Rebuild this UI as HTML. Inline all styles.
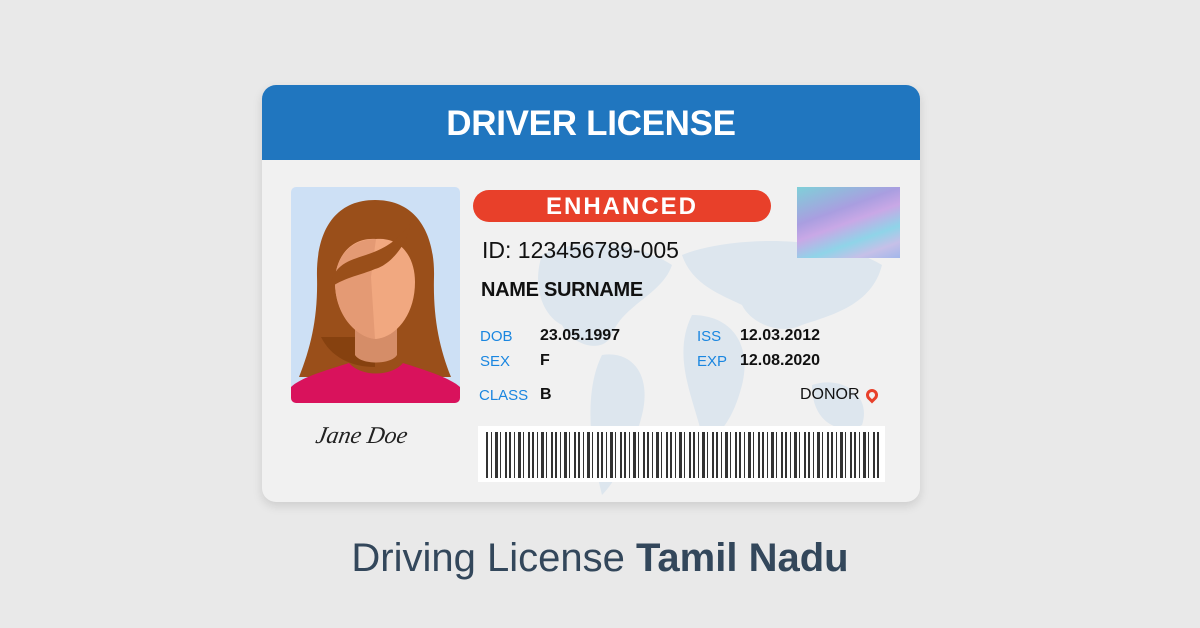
<!DOCTYPE html>
<html><head><meta charset="utf-8"><style>
*{margin:0;padding:0;box-sizing:border-box}
body{width:1200px;height:628px;background:#e9e9e9;font-family:"Liberation Sans",sans-serif;position:relative;overflow:hidden}
.card{position:absolute;left:262px;top:85px;width:658px;height:417px;background:#f1f1f1;border-radius:14px;overflow:hidden;box-shadow:0 4px 10px rgba(0,0,0,.12)}
.hdr{position:absolute;left:0;top:0;width:100%;height:75px;background:#2076bf;color:#fff;font-weight:bold;font-size:35px;text-align:center;line-height:78px;letter-spacing:-0.3px}
.photo{position:absolute;left:29px;top:102px;width:169px;height:216px;background:#cde0f5;border-radius:5px;overflow:hidden}
.pill{position:absolute;left:211px;top:105px;width:298px;height:32px;background:#e8402a;border-radius:16px;color:#fff;font-weight:bold;font-size:24px;text-align:center;line-height:33px;letter-spacing:2px}
.holo{position:absolute;left:535px;top:102px;width:103px;height:71px;background:linear-gradient(160deg,#7fd0d8 0%,#a99ee0 35%,#c9a8e6 50%,#8fd4e8 70%,#c6c0e8 85%,#a2b7ea 100%)}
.t{position:absolute;color:#111;white-space:nowrap}
.l{position:absolute;color:#1a86e0;font-size:15px;white-space:nowrap}
.v{position:absolute;color:#111;font-size:16px;font-weight:bold;white-space:nowrap}
.bc{position:absolute;left:216px;top:341px;width:407px;height:56px;background:#fff}
.bars{position:absolute;left:8px;top:6px;width:395px;height:46px;
background:
repeating-linear-gradient(90deg,#333 0 2px,transparent 2px 5px,#333 5px 6px,transparent 6px 9px,#333 9px 12px,transparent 12px 14px,#333 14px 15px,transparent 15px 19px,#333 19px 21px,transparent 21px 23px);}
.cap{position:absolute;left:0;width:1200px;top:536px;text-align:center;font-size:40px;color:#33475b}
</style></head><body>
<div class="card">
<div class="hdr">DRIVER LICENSE</div>
<svg style="position:absolute;left:240px;top:150px" width="400" height="260" viewBox="0 0 400 260"><g fill="#dde6ee">
<path d="M40 20 C80 0 140 10 170 30 C160 60 120 70 110 100 C100 120 70 110 60 90 C40 80 30 50 40 20Z"/>
<path d="M100 120 C130 115 150 140 140 180 C130 220 110 250 100 260 C90 220 80 160 100 120Z"/>
<path d="M180 20 C230 0 330 0 380 30 C370 70 330 80 300 90 C280 100 250 90 240 70 C220 60 190 50 180 20Z"/>
<path d="M190 80 C230 80 250 110 240 150 C230 190 210 210 200 200 C190 160 170 120 190 80Z"/>
<path d="M310 150 C340 140 370 160 360 190 C340 200 310 190 310 150Z"/>
</g></svg>
<div class="photo"><svg width="169" height="216" viewBox="0 0 169 216">
<path d="M84 13 C40 13 25 50 26 90 C27 130 20 160 8 190 L160 190 C148 160 142 130 143 90 C144 50 128 13 84 13Z" fill="#9a4f1a"/>
<path d="M30 150 C40 170 60 180 84 180 L84 150Z" fill="#86410f"/>
<path d="M64 140 L64 168 C70 178 100 178 106 168 L106 140Z" fill="#d58d68"/>
<path d="M44 95 C44 70 60 50 85 52 C110 50 124 70 124 95 C124 128 105 150 85 152 C65 150 44 128 44 95Z" fill="#f1a880"/>
<path d="M44 95 C44 70 60 52 85 52 L80 90 L84 152 C65 150 44 128 44 95Z" fill="#e49a74"/>
<path d="M40 95 C50 60 90 80 120 35 C118 55 100 78 84 82 C70 88 55 90 40 100Z" fill="#9a4f1a"/>
<path d="M0 200 C10 190 40 182 58 176 C70 190 100 190 112 176 C130 182 158 190 169 200 L169 216 L0 216Z" fill="#d9125c"/>
</svg></div>
<div class="t" style="left:54px;top:338px;font-family:'Liberation Serif',serif;font-style:italic;font-size:24px;color:#222;transform:skewX(-10deg)">Jane Doe</div>
<div class="pill">ENHANCED</div>
<div class="holo"></div>
<div class="t" style="left:220px;top:152px;font-size:23px">ID: 123456789-005</div>
<div class="t" style="left:219px;top:194px;font-size:20px;font-weight:bold;letter-spacing:-0.3px">NAME SURNAME</div>
<div class="l" style="left:218px;top:243px">DOB</div><div class="v" style="left:278px;top:242px">23.05.1997</div>
<div class="l" style="left:218px;top:268px">SEX</div><div class="v" style="left:278px;top:267px">F</div>
<div class="l" style="left:435px;top:243px">ISS</div><div class="v" style="left:478px;top:242px">12.03.2012</div>
<div class="l" style="left:435px;top:268px">EXP</div><div class="v" style="left:478px;top:267px">12.08.2020</div>
<div class="l" style="left:217px;top:302px">CLASS</div><div class="v" style="left:278px;top:301px">B</div>
<div class="t" style="left:538px;top:301px;font-size:16px">DONOR</div>
<div style="position:absolute;left:604px;top:304px;width:12px;height:12px;border:3px solid #e8402a;border-radius:50% 50% 50% 0;transform:rotate(-45deg)"></div>
<div class="bc"><div class="bars"></div></div>
</div>
<div class="cap">Driving License <b>Tamil Nadu</b></div>
</body></html>
